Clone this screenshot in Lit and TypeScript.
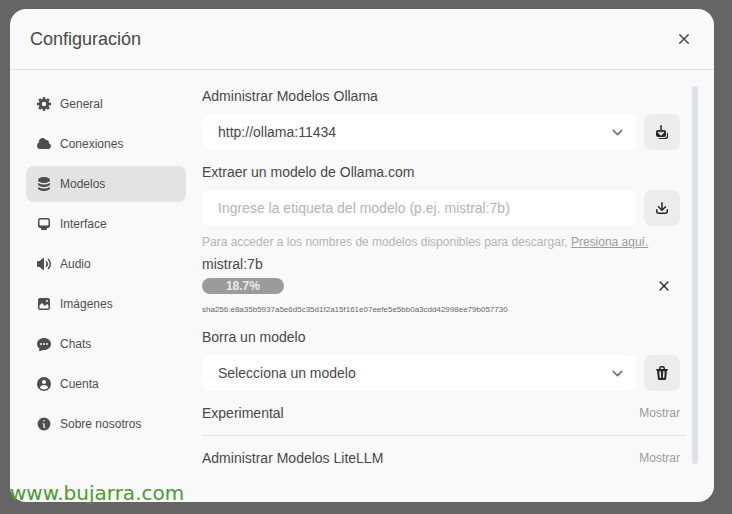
import { LitElement, html, css, svg } from "lit";
import { customElement, state } from "lit/decorators.js";
import { classMap } from "lit/directives/class-map.js";

const icons: Record<string, string[]> = {
  connections: [
    "M1 9.5A3.5 3.5 0 0 0 4.5 13H12a3 3 0 0 0 .917-5.857 2.503 2.503 0 0 0-3.198-3.019 3.5 3.5 0 0 0-6.628 2.171A3.5 3.5 0 0 0 1 9.5Z",
  ],
  models: [
    "M8 7c3.314 0 6-1.343 6-3s-2.686-3-6-3-6 1.343-6 3 2.686 3 6 3Z",
    "M8 8.5c1.84 0 3.579-.37 4.914-1.037A6.33 6.33 0 0 0 14 6.78V8c0 1.657-2.686 3-6 3S2 9.657 2 8V6.78c.346.273.72.5 1.087.683C4.42 8.131 6.16 8.5 8 8.5Z",
    "M8 12.5c1.84 0 3.579-.37 4.914-1.037.366-.183.74-.41 1.086-.684V12c0 1.657-2.686 3-6 3s-6-1.343-6-3v-1.22c.346.273.72.5 1.087.683C4.42 12.131 6.16 12.5 8 12.5Z",
  ],
  interface: [
    "M2 4.25A2.25 2.25 0 0 1 4.25 2h7.5A2.25 2.25 0 0 1 14 4.25v5.5A2.25 2.25 0 0 1 11.75 12h-1.312c.1.128.21.248.328.36a.75.75 0 0 1 .234.545v.345a.75.75 0 0 1-.75.75h-4.5a.75.75 0 0 1-.75-.75v-.345a.75.75 0 0 1 .234-.545c.118-.111.228-.232.328-.36H4.25A2.25 2.25 0 0 1 2 9.75v-5.5Zm2.25-.75a.75.75 0 0 0-.75.75v4.5c0 .414.336.75.75.75h7.5a.75.75 0 0 0 .75-.75v-4.5a.75.75 0 0 0-.75-.75h-7.5Z",
  ],
  audio: [
    "M7.557 2.066A.75.75 0 0 1 8 2.75v10.5a.75.75 0 0 1-1.248.56L3.59 11H2a1 1 0 0 1-1-1V6a1 1 0 0 1 1-1h1.59l3.162-2.81a.75.75 0 0 1 .805-.124ZM12.95 3.05a.75.75 0 1 0-1.06 1.06 5.5 5.5 0 0 1 0 7.78.75.75 0 1 0 1.06 1.06 7 7 0 0 0 0-9.9Z",
    "M10.828 5.172a.75.75 0 1 0-1.06 1.06 2.5 2.5 0 0 1 0 3.536.75.75 0 1 0 1.06 1.06 4 4 0 0 0 0-5.656Z",
  ],
  images: [
    "M2 4a2 2 0 0 1 2-2h8a2 2 0 0 1 2 2v8a2 2 0 0 1-2 2H4a2 2 0 0 1-2-2V4Zm10.5 5.707a.5.5 0 0 0-.146-.353l-1-1a.5.5 0 0 0-.708 0L9.354 9.646a.5.5 0 0 1-.708 0L6.354 7.354a.5.5 0 0 0-.708 0l-2 2a.5.5 0 0 0-.146.353V12a.5.5 0 0 0 .5.5h8a.5.5 0 0 0 .5-.5V9.707ZM12 5a1 1 0 1 1-2 0 1 1 0 0 1 2 0Z",
  ],
  chats: [
    "M8 2C4.262 2 1 4.57 1 8c0 1.86.98 3.486 2.455 4.566a3.472 3.472 0 0 1-.469 1.26.75.75 0 0 0 .713 1.14 6.961 6.961 0 0 0 3.06-1.06c.403.062.818.094 1.241.094 3.738 0 7-2.57 7-6s-3.262-6-7-6ZM5 9a1 1 0 1 0 0-2 1 1 0 0 0 0 2Zm7-1a1 1 0 1 1-2 0 1 1 0 0 1 2 0ZM8 9a1 1 0 1 0 0-2 1 1 0 0 0 0 2Z",
  ],
  account: [
    "M15 8A7 7 0 1 1 1 8a7 7 0 0 1 14 0Zm-5-2a2 2 0 1 1-4 0 2 2 0 0 1 4 0ZM8 9c-1.825 0-3.422.977-4.295 2.437A5.49 5.49 0 0 0 8 13.5a5.49 5.49 0 0 0 4.294-2.063A4.997 4.997 0 0 0 8 9Z",
  ],
  about: [
    "M18 10a8 8 0 1 1-16 0 8 8 0 0 1 16 0Zm-7-4a1 1 0 1 1-2 0 1 1 0 0 1 2 0ZM9 9a.75.75 0 0 0 0 1.5h.253a.25.25 0 0 1 .244.304l-.459 2.066A1.75 1.75 0 0 0 10.747 15H11a.75.75 0 0 0 0-1.5h-.253a.25.25 0 0 1-.244-.304l.459-2.066A1.75 1.75 0 0 0 9.253 9H9Z",
  ],
  close: [
    "M6.28 5.22a.75.75 0 00-1.06 1.06L8.94 10l-3.72 3.72a.75.75 0 101.06 1.06L10 11.06l3.72 3.72a.75.75 0 101.06-1.06L11.06 10l3.72-3.72a.75.75 0 00-1.06-1.06L10 8.94 6.28 5.22z",
  ],
  download: [
    "M8.75 2.75a.75.75 0 0 0-1.5 0v5.69L5.03 6.22a.75.75 0 0 0-1.06 1.06l3.5 3.5a.75.75 0 0 0 1.06 0l3.5-3.5a.75.75 0 0 0-1.06-1.06L8.75 8.44V2.75Z",
    "M3.5 9.75a.75.75 0 0 0-1.5 0v1.5A2.75 2.75 0 0 0 4.75 14h6.5A2.75 2.75 0 0 0 14 11.25v-1.5a.75.75 0 0 0-1.5 0v1.5c0 .69-.56 1.25-1.25 1.25h-6.5c-.69 0-1.25-.56-1.25-1.25v-1.5Z",
  ],
  trash: [
    "M5 3.25V4H2.75a.75.75 0 0 0 0 1.5h.3l.815 8.15A1.5 1.5 0 0 0 5.357 15h5.285a1.5 1.5 0 0 0 1.493-1.35l.815-8.15h.3a.75.75 0 0 0 0-1.5H11v-.75A2.25 2.25 0 0 0 8.75 1h-1.5A2.25 2.25 0 0 0 5 3.25Zm2.25-.75a.75.75 0 0 0-.75.75V4h3v-.75a.75.75 0 0 0-.75-.75h-1.5ZM6.05 6a.75.75 0 0 1 .787.713l.275 5.5a.75.75 0 0 1-1.498.075l-.275-5.5A.75.75 0 0 1 6.05 6Zm3.9 0a.75.75 0 0 1 .712.787l-.275 5.5a.75.75 0 0 1-1.498-.075l.275-5.5a.75.75 0 0 1 .786-.711Z",
  ],
};

const gear = html`
  <svg class="icon" viewBox="0 0 16 16" fill="none" stroke="currentColor" aria-hidden="true">
    <circle cx="8" cy="8" r="3.8" stroke-width="3.2"></circle>
    <circle cx="8" cy="8" r="6" stroke-width="2" pathLength="80" stroke-dasharray="5.5 4.5" stroke-dashoffset="2.75"></circle>
  </svg>
`;

const updateAll = html`
  <svg class="icon" viewBox="0 0 16 16" fill="currentColor" aria-hidden="true">
    <path d="M4 6h6a2 2 0 0 1 2 2v3a2 2 0 0 1-2 2H4a2 2 0 0 1-2-2V8a2 2 0 0 1 2-2Z"></path>
    <path d="M4.268 14A2 2 0 0 0 6 15h6a2 2 0 0 0 2-2v-3a2 2 0 0 0-1-1.732V11a3 3 0 0 1-3 3H4.268Z"></path>
    <path
      d="M4.5 8.2 7 10.7 9.5 8.2M7 6v4"
      fill="none"
      stroke="#ececec"
      stroke-width="1.5"
      stroke-linecap="round"
      stroke-linejoin="round"
    ></path>
    <path d="M7 1.75V7.5" stroke="currentColor" stroke-width="1.5" stroke-linecap="round"></path>
  </svg>
`;

const icon = (name: string, box = 16) =>
  name === "general"
    ? gear
    : html`
        <svg class="icon" viewBox="0 0 ${box} ${box}" fill="currentColor" aria-hidden="true">
          ${icons[name].map((d) => svg`<path fill-rule="evenodd" clip-rule="evenodd" d=${d}></path>`)}
        </svg>
      `;

const chevron = html`
  <svg class="chevron" viewBox="0 0 20 20" fill="none" aria-hidden="true">
    <path d="M6 8l4 4 4-4" stroke="#6b7280" stroke-width="1.5" stroke-linecap="round" stroke-linejoin="round"></path>
  </svg>
`;

const tabs = [
  { id: "general", label: "General" },
  { id: "connections", label: "Conexiones" },
  { id: "models", label: "Modelos" },
  { id: "interface", label: "Interface" },
  { id: "audio", label: "Audio" },
  { id: "images", label: "Imágenes" },
  { id: "chats", label: "Chats" },
  { id: "account", label: "Cuenta" },
  { id: "about", label: "Sobre nosotros", box: 20 },
];

@customElement("app-root")
export class AppRoot extends LitElement {
  @state() private active = "models";

  private download = {
    name: "mistral:7b",
    percent: 18.7,
    digest: "sha256:e8a35b5937a5e6d5c35d1f2a15f161e07eefe5e5bb0a3cdd42998ee79b057730",
  };

  static styles = css`
    :host {
      display: flex;
      position: relative;
      box-sizing: border-box;
      min-height: 100vh;
      padding: 9px 18px 12px 10px;
      background: #656565;
      color: #484848;
      font: 14px/20px "Liberation Sans", Arial, sans-serif;
    }
    * {
      box-sizing: border-box;
    }
    button,
    input,
    select {
      margin: 0;
      padding: 0;
      border: 0;
      background: none;
      color: inherit;
      font: inherit;
      text-align: left;
    }
    button {
      cursor: pointer;
    }
    h1,
    p {
      margin: 0;
      font-weight: 400;
    }
    .icon {
      display: block;
      flex: none;
      width: 16px;
      height: 16px;
    }
    .modal {
      display: flex;
      flex: 1;
      flex-direction: column;
      min-width: 0;
      border-radius: 16px;
      background: #f9f9f9;
    }
    .head {
      display: flex;
      align-items: center;
      justify-content: space-between;
      padding: 16px 20px;
      border-bottom: 1px solid #e3e3e3;
    }
    .title {
      font-size: 18px;
      line-height: 28px;
    }
    .head .icon {
      width: 20px;
      height: 20px;
    }
    .body {
      display: flex;
      flex: 1;
      gap: 16px;
      padding: 16px 16px 34px;
    }
    .tabs {
      display: flex;
      flex: none;
      flex-direction: column;
      gap: 4px;
      width: 160px;
    }
    .tab {
      display: flex;
      align-items: center;
      gap: 8px;
      height: 36px;
      padding: 0 10px;
      border-radius: 8px;
      color: #4e4e4e;
      font-size: 12px;
    }
    .tab.active {
      background: #e3e3e3;
    }
    .pane {
      display: flex;
      flex: 1;
      align-items: stretch;
      gap: 6px;
      min-width: 0;
    }
    .form {
      display: flex;
      flex: 1;
      flex-direction: column;
      min-width: 0;
    }
    .group {
      display: grid;
      gap: 8px;
      padding: 0 6px 12px 0;
    }
    .row {
      display: flex;
      gap: 8px;
    }
    .field {
      display: grid;
      flex: 1;
      align-items: center;
      min-width: 0;
    }
    .control {
      grid-area: 1 / 1;
      width: 100%;
      height: 36px;
      padding: 0 16px;
      border-radius: 8px;
      background: #fff;
      appearance: none;
    }
    .control::placeholder {
      color: #b4b4b4;
      opacity: 1;
    }
    .chevron {
      grid-area: 1 / 1;
      justify-self: end;
      width: 21px;
      height: 21px;
      margin-right: 8px;
      pointer-events: none;
    }
    .action {
      display: grid;
      flex: none;
      place-items: center;
      width: 36px;
      border-radius: 8px;
      background: #ececec;
      color: #262626;
    }
    .hint {
      color: #b4b4b4;
      font-size: 12px;
      line-height: 16px;
    }
    .hint a {
      color: #9b9b9b;
    }
    .pull {
      padding: 0 6px 9px 0;
    }
    .pull-group {
      padding-bottom: 4px;
    }
    .progress {
      display: flex;
      align-items: center;
      gap: 8px;
      height: 24px;
    }
    .track {
      flex: 1;
    }
    .bar {
      border-radius: 8px;
      background: #9b9b9b;
      color: #ececec;
      font-size: 12px;
      font-weight: 700;
      line-height: 16px;
      text-align: center;
    }
    .cancel {
      display: grid;
      flex: none;
      place-items: center;
      width: 32px;
      height: 24px;
      color: #262626;
    }
    .digest {
      padding-top: 4px;
      color: #676767;
      font-size: 8px;
      line-height: 16px;
    }
    .fold {
      display: flex;
      align-items: center;
      justify-content: space-between;
      padding-right: 6px;
    }
    .toggle {
      color: #9b9b9b;
      font-size: 12px;
    }
    .rule {
      width: 100%;
      margin: 12px 0;
      border: 0;
      border-top: 1px solid #e3e3e3;
    }
    .scrollbar {
      flex: none;
      width: 6px;
      margin-bottom: 4px;
      border-radius: 3px;
      background: #e0e0e9;
    }
    .watermark {
      position: absolute;
      bottom: 9px;
      left: 10px;
      color: #4b9b2f;
      font: 20px/24px "DejaVu Sans", Verdana, sans-serif;
    }
  `;

  render() {
    const { name, percent, digest } = this.download;
    return html`
      <section class="modal" role="dialog" aria-labelledby="title">
        <header class="head">
          <h1 class="title" id="title">Configuración</h1>
          <button aria-label="Cerrar">${icon("close", 20)}</button>
        </header>
        <div class="body">
          <nav class="tabs">
            ${tabs.map(
              (t) => html`
                <button
                  class=${classMap({ tab: true, active: t.id === this.active })}
                  @click=${() => (this.active = t.id)}
                >
                  ${icon(t.id, t.box)}<span>${t.label}</span>
                </button>
              `
            )}
          </nav>
          <div class="pane">
            <div class="form">
              <div class="group">
                <label for="server">Administrar Modelos Ollama</label>
                <div class="row">
                  <div class="field">
                    <select class="control" id="server">
                      <option>http://ollama:11434</option>
                    </select>
                    ${chevron}
                  </div>
                  <button class="action" aria-label="Actualizar todos los modelos">${updateAll}</button>
                </div>
              </div>
              <div class="group pull-group">
                <label for="tag">Extraer un modelo de Ollama.com</label>
                <div class="row">
                  <div class="field">
                    <input class="control" id="tag" placeholder="Ingrese la etiqueta del modelo (p.ej. mistral:7b)" />
                  </div>
                  <button class="action" aria-label="Descargar">${icon("download")}</button>
                </div>
                <p class="hint">
                  Para acceder a los nombres de modelos disponibles para descargar,
                  <a href="#library">Presiona aquí.</a>
                </p>
              </div>
              <div class="pull">
                <p>${name}</p>
                <div class="progress">
                  <div class="track">
                    <div class="bar" style="width: ${percent}%">${percent}%</div>
                  </div>
                  <button class="cancel" aria-label="Cancelar">
                    <svg class="icon" viewBox="0 0 24 24" fill="none" aria-hidden="true">
                      <path
                        d="M6 18 17.94 6M18 18 6.06 6"
                        stroke="currentColor"
                        stroke-width="2"
                        stroke-linecap="round"
                        stroke-linejoin="round"
                      ></path>
                    </svg>
                  </button>
                </div>
                <p class="digest">${digest}</p>
              </div>
              <div class="group">
                <label for="remove">Borra un modelo</label>
                <div class="row">
                  <div class="field">
                    <select class="control" id="remove">
                      <option>Selecciona un modelo</option>
                    </select>
                    ${chevron}
                  </div>
                  <button class="action" aria-label="Borrar">${icon("trash")}</button>
                </div>
              </div>
              <div class="fold"><span>Experimental</span><button class="toggle">Mostrar</button></div>
              <hr class="rule" />
              <div class="fold"><span>Administrar Modelos LiteLLM</span><button class="toggle">Mostrar</button></div>
            </div>
            <div class="scrollbar"></div>
          </div>
        </div>
      </section>
      <div class="watermark">www.bujarra.com</div>
    `;
  }
}
